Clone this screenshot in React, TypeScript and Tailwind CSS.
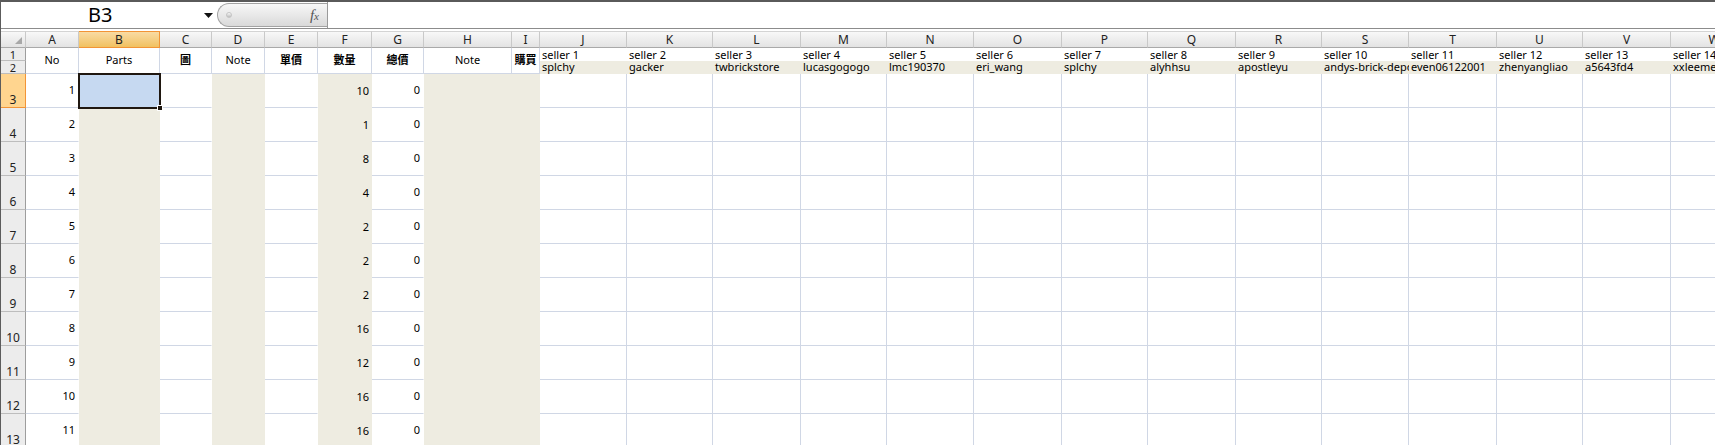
import React from 'react';

const letters = ['A','B','C','D','E','F','G','H','I','J','K','L','M','N','O','P','Q','R','S','T','U','V','W'];
const beigeCols = ['B', 'D', 'F', 'H', 'I'];

const headers = ['No', 'Parts', '圖', 'Note', '單價', '數量', '總價', 'Note', '購買'];
const cjk = [false, false, true, false, true, true, true, false, true];

const sellers = [
  'splchy', 'gacker', 'twbrickstore', 'lucasgogogo', 'lmc190370', 'eri_wang', 'splchy',
  'alyhhsu', 'apostleyu', 'andys-brick-depot', 'even06122001', 'zhenyangliao', 'a5643fd4', 'xxleemen',
];

const qty = [10, 1, 8, 4, 2, 2, 2, 16, 12, 16, 16];

function ColHeader({ letter }: { letter: string }) {
  if (letter === 'B') {
    return (
      <div className="flex items-center justify-center border-t border-b border-r border-[#f29436] bg-gradient-to-b from-[#f9dba3] to-[#f1c15f] text-[12px] text-[#222]">
        {letter}
      </div>
    );
  }
  return (
    <div className="flex items-center justify-center border-t border-t-[#d4d4d4] border-b border-b-[#a9a9a9] border-r border-r-[#c9c9c9] bg-gradient-to-b from-[#f8f8f8] to-[#e3e3e3] text-[12px] text-[#222]">
      {letter}
    </div>
  );
}

function RowHeader({ n, selected }: { n: number; selected?: boolean }) {
  if (selected) {
    return (
      <div className="flex items-end justify-center pb-[1px] border-b border-r border-[#f29436] bg-[#ffd58f] text-[12px] leading-none text-[#222]">
        {n}
      </div>
    );
  }
  return (
    <div
      className={`flex justify-center border-b border-b-[#bdbdbd] border-r border-r-[#9d9d9d] bg-[#ececec] leading-none text-[#222] ${
        n <= 2 ? 'items-center text-[11px]' : 'items-end pb-[1px] text-[12px]'
      }`}
    >
      {n}
    </div>
  );
}

function DataCell({ col, row }: { col: number; row: number }) {
  const letter = letters[col];
  const beige = beigeCols.includes(letter);
  const nextBeige = beigeCols.includes(letters[col + 1] ?? '');
  const selected = letter === 'B' && row === 3;
  let content: React.ReactNode = null;
  if (letter === 'A') content = row - 2;
  if (letter === 'F') content = qty[row - 3];
  if (letter === 'G') content = 0;

  if (selected) {
    return (
      <div className="relative bg-[#c6d9f1]">
        <div className="absolute -left-[1px] -top-[1px] -right-[1px] -bottom-[1px] z-10 border-2 border-[#1f1710]" />
        <div className="absolute -right-[3px] -bottom-[3px] z-20 h-[6px] w-[6px] border border-white bg-[#1f1710]" />
      </div>
    );
  }
  if (beige) {
    return (
      <div className="flex items-center justify-end bg-[#eeece1] px-[3px] text-[11px] text-black">
        {content}
      </div>
    );
  }
  return (
    <div
      className={`flex items-center justify-end px-[3px] border-b border-b-[#d0d7e5] border-r ${
        nextBeige ? 'border-r-transparent' : 'border-r-[#d0d7e5]'
      } text-[11px] text-black`}
    >
      {content}
    </div>
  );
}

export default function App() {
  const rows = Array.from({ length: 11 }, (_, i) => i + 3);
  return (
    <div className="h-[445px] w-[1715px] overflow-hidden border-l border-[#5c5c5c] bg-white font-['Noto_Sans','Noto_Sans_CJK_TC',sans-serif]">
      {/* formula bar */}
      <div className="flex h-[29px] items-stretch border-t-2 border-t-[#5a5a5a] border-b border-b-[#8c8c8c]">
        <div className="flex w-[216px] items-center">
          <span className="w-[203px] pl-[87px] text-[20px] leading-none text-black">B3</span>
          <svg width="9" height="5" viewBox="0 0 9 5">
            <path d="M0 0 L9 0 L4.5 5 Z" fill="#111" />
          </svg>
        </div>
        <div className="my-[1px] flex w-[110px] items-center justify-between rounded-l-full border border-r-0 border-[#a3a3a3] bg-gradient-to-b from-[#f8f8f8] to-[#d9d9d9] pl-[8px] pr-[8px]">
          <div className="h-[6px] w-[6px] rounded-full border border-[#c4c4c4] bg-gradient-to-b from-[#fafafa] to-[#bdbdbd]" />
          <span className="font-['Liberation_Serif',serif] text-[15px] italic leading-none text-[#555]">
            f<span className="text-[11px]">x</span>
          </span>
        </div>
        <div className="flex-1 border-l border-[#9a9a9a]" />
      </div>
      <div className="h-[2px]" />

      {/* sheet */}
      <div className="grid grid-cols-[25px_53px_81px_52px_53px_53px_54px_52px_88px_28px_87px_86px_88px_86px_87px_88px_86px_88px_86px_87px_88px_86px_88px_87px] grid-rows-[17px_13px_13px_repeat(11,34px)]">
        {/* header row */}
        <div className="relative border-t border-t-[#d4d4d4] border-b border-b-[#a9a9a9] border-r border-r-[#c9c9c9] bg-gradient-to-b from-[#f8f8f8] to-[#e3e3e3]">
          <svg className="absolute right-[3px] bottom-[3px]" width="7" height="7" viewBox="0 0 7 7">
            <path d="M7 0 L7 7 L0 7 Z" fill="#a8a8a8" />
          </svg>
        </div>
        {letters.map((l) => (
          <ColHeader key={l} letter={l} />
        ))}

        {/* row 1 */}
        <RowHeader n={1} />
        {headers.map((h, i) => (
          <div
            key={'h' + i}
            className={`row-span-2 flex items-center justify-center border-b border-b-[#d0d7e5] border-r border-r-[#d0d7e5] text-[11px] text-black ${
              cjk[i] ? 'font-bold' : ''
            }`}
          >
            {h}
          </div>
        ))}
        {sellers.map((_, i) => (
          <div key={'s' + i} className="overflow-x-clip whitespace-nowrap bg-white pl-[2px] text-[11px] leading-[13px] text-black">
            seller {i + 1}
          </div>
        ))}

        {/* row 2 */}
        <RowHeader n={2} />
        {sellers.map((s, i) => (
          <div key={'n' + i} className="overflow-x-clip whitespace-nowrap bg-[#eeece1] pl-[2px] text-[11px] leading-[12px] text-black">
            {s}
          </div>
        ))}

        {/* data rows */}
        {rows.map((r) => (
          <React.Fragment key={r}>
            <RowHeader n={r} selected={r === 3} />
            {letters.map((_, c) => (
              <DataCell key={c} col={c} row={r} />
            ))}
          </React.Fragment>
        ))}
      </div>
    </div>
  );
}
